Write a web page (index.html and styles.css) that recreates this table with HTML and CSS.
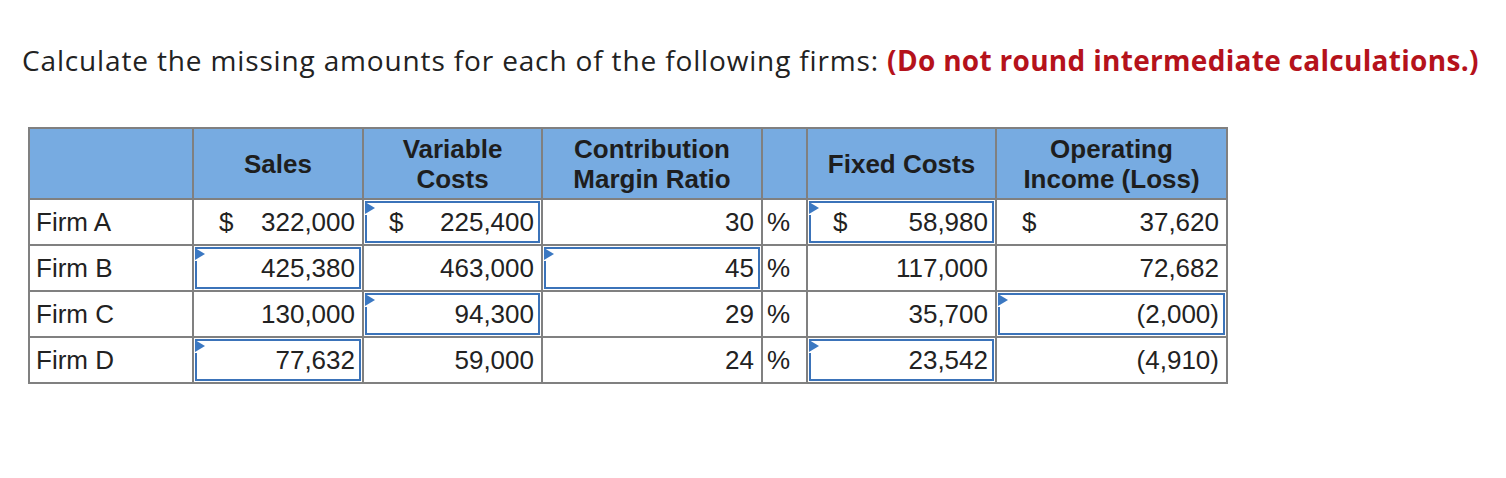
FILE: index.html
```html
<!DOCTYPE html>
<html>
<head>
<meta charset="utf-8">
<link rel="stylesheet" href="styles.css">
</head>
<body>
<div class="page">
  <p class="prompt">Calculate the missing amounts for each of the following firms: <strong class="note">(Do not round intermediate calculations.)</strong></p>
  <table class="grid">
    <colgroup>
      <col class="c-firm">
      <col class="c-sales">
      <col class="c-var">
      <col class="c-cm">
      <col class="c-pct">
      <col class="c-fixed">
      <col class="c-op">
    </colgroup>
    <thead>
      <tr>
        <th></th>
        <th>Sales</th>
        <th>Variable<br>Costs</th>
        <th>Contribution<br>Margin Ratio</th>
        <th></th>
        <th>Fixed Costs</th>
        <th>Operating<br>Income (Loss)</th>
      </tr>
    </thead>
    <tbody>
      <tr>
        <td class="firm">Firm A</td>
        <td><div class="val"><span>$</span><span>322,000</span></div></td>
        <td><div class="val input"><span>$</span><span>225,400</span></div></td>
        <td><div class="val"><span></span><span>30</span></div></td>
        <td class="pct">%</td>
        <td><div class="val input"><span>$</span><span>58,980</span></div></td>
        <td><div class="val"><span>$</span><span>37,620</span></div></td>
      </tr>
      <tr>
        <td class="firm">Firm B</td>
        <td><div class="val input"><span></span><span>425,380</span></div></td>
        <td><div class="val"><span></span><span>463,000</span></div></td>
        <td><div class="val input"><span></span><span>45</span></div></td>
        <td class="pct">%</td>
        <td><div class="val"><span></span><span>117,000</span></div></td>
        <td><div class="val"><span></span><span>72,682</span></div></td>
      </tr>
      <tr>
        <td class="firm">Firm C</td>
        <td><div class="val"><span></span><span>130,000</span></div></td>
        <td><div class="val input"><span></span><span>94,300</span></div></td>
        <td><div class="val"><span></span><span>29</span></div></td>
        <td class="pct">%</td>
        <td><div class="val"><span></span><span>35,700</span></div></td>
        <td><div class="val input"><span></span><span>(2,000)</span></div></td>
      </tr>
      <tr>
        <td class="firm">Firm D</td>
        <td><div class="val input"><span></span><span>77,632</span></div></td>
        <td><div class="val"><span></span><span>59,000</span></div></td>
        <td><div class="val"><span></span><span>24</span></div></td>
        <td class="pct">%</td>
        <td><div class="val input"><span></span><span>23,542</span></div></td>
        <td><div class="val"><span></span><span>(4,910)</span></div></td>
      </tr>
    </tbody>
  </table>
</div>
</body>
</html>
```
FILE: styles.css
```css
* { box-sizing: border-box; }
html, body { margin: 0; padding: 0; background: #fff; }
.page {
  padding: 40px 0 0 22px;
}
.prompt {
  margin: 0;
  font-family: "Open Sans", Lato, sans-serif;
  font-size: 28px;
  line-height: 40px;
  letter-spacing: 0.85px;
  font-variant-ligatures: none;
  color: #222;
  white-space: nowrap;
}
.note {
  color: #b5121b;
  font-weight: bold;
  letter-spacing: 0.3px;
}
.grid {
  margin: 47px 0 0 6px;
  border-collapse: collapse;
  table-layout: fixed;
  width: 1198px;
  font-family: "Liberation Sans", Arial, sans-serif;
  font-size: 26px;
  color: #222;
}
.c-firm { width: 164px; }
.c-sales { width: 170px; }
.c-var { width: 179px; }
.c-cm { width: 220px; }
.c-pct { width: 45px; }
.c-fixed { width: 189px; }
.c-op { width: 231px; }
.grid th, .grid td {
  border: 2px solid #808080;
}
.grid th {
  background: #77abe1;
  font-size: 26px;
  font-weight: bold;
  line-height: 30px;
  height: 71px;
  padding: 0;
  text-align: center;
  vertical-align: middle;
  color: #1e1e1e;
}
.grid td {
  height: 46px;
  padding: 1px;
  vertical-align: middle;
}
.grid td.firm {
  padding-left: 6px;
}
.grid td.pct {
  padding-left: 4px;
}
.val {
  position: relative;
  height: 42px;
  border: 2px solid transparent;
  padding: 0 4px 0 22px;
  display: flex;
  align-items: center;
  justify-content: space-between;
}
.val.input {
  border-color: #3b73b9;
}
.val.input::before {
  content: "";
  position: absolute;
  left: -2px;
  top: 0;
  width: 3px;
  height: 12px;
  background: #fff;
}
.val.input::after {
  content: "";
  position: absolute;
  left: -2px;
  top: -1px;
  width: 0;
  height: 0;
  border-top: 6px solid transparent;
  border-bottom: 6px solid transparent;
  border-left: 10px solid #3b78c2;
}
```
